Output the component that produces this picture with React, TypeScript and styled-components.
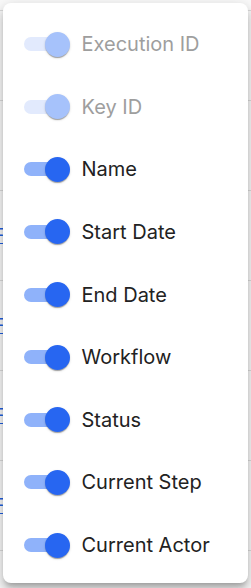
import React from "react";
import styled, { createGlobalStyle } from "styled-components";

const Global = createGlobalStyle`
  html, body { margin: 0; padding: 0; background: #ffffff; }
  body { font-family: Inter, "Noto Sans", sans-serif; overflow: hidden; }
`;

const Page = styled.div`
  position: relative;
  width: 251px;
  height: 588px;
  overflow: hidden;
  background: #fafafa;
`;

const Table = styled.div`
  display: flex;
  flex-direction: column;
  padding-top: 10px;
`;

const TRow = styled.div<{ $h: number }>`
  height: ${(p) => p.$h}px;
  border-top: 1px solid #dcdcdc;
  box-sizing: border-box;
  display: flex;
  align-items: center;
  font-size: 18px;
  font-family: Inter, sans-serif;
`;

const Link = styled.span`
  color: #1f5fe0;
  text-decoration: underline;
  margin-left: -6px;
`;

const Dark = styled.span`
  color: #222;
  margin-left: -8px;
`;

const Popover = styled.div`
  position: absolute;
  left: 3px;
  top: 3px;
  width: 245px;
  height: 580px;
  background: #fff;
  border-radius: 8px;
  box-shadow: 0 5px 5px -3px rgba(0,0,0,0.2), 0 8px 10px 1px rgba(0,0,0,0.14), 0 3px 14px 2px rgba(0,0,0,0.12);
  box-sizing: border-box;
  padding: 9.7px 0 6.7px;
  display: flex;
  flex-direction: column;
`;

const Item = styled.div`
  height: 62.625px;
  display: flex;
  align-items: center;
  padding-left: 20.5px;
  flex-shrink: 0;
`;

const SwitchBox = styled.div`
  position: relative;
  width: 48px;
  height: 26px;
  flex-shrink: 0;
`;

const Track = styled.div<{ $disabled?: boolean }>`
  position: absolute;
  left: 0;
  top: 6px;
  width: 38px;
  height: 14px;
  border-radius: 7px;
  background: ${(p) => (p.$disabled ? "#e2eafd" : "#8fb2fa")};
`;

const Thumb = styled.div<{ $disabled?: boolean }>`
  position: absolute;
  left: 21.5px;
  top: 0.5px;
  width: 25px;
  height: 25px;
  border-radius: 50%;
  background: ${(p) => (p.$disabled ? "#a6c2fb" : "#2766f1")};
  box-shadow: 0 2px 1px -1px rgba(0,0,0,0.2), 0 1px 1px 0 rgba(0,0,0,0.14), 0 1px 3px 0 rgba(0,0,0,0.12);
`;

const Label = styled.span<{ $disabled?: boolean }>`
  margin-left: 10px;
  font-family: Inter, sans-serif;
  font-size: 20px;
  font-weight: 400;
  color: ${(p) => (p.$disabled ? "#9e9e9e" : "#222222")};
  white-space: nowrap;
`;

const items = [
  { label: "Execution ID", disabled: true },
  { label: "Key ID", disabled: true },
  { label: "Name" },
  { label: "Start Date" },
  { label: "End Date" },
  { label: "Workflow" },
  { label: "Status" },
  { label: "Current Step" },
  { label: "Current Actor" },
];

const rows: { h: number; kind?: "dark" | "link" }[] = [
  { h: 90, kind: "dark" },
  { h: 90, kind: "dark" },
  { h: 90, kind: "link" },
  { h: 90, kind: "link" },
  { h: 90, kind: "link" },
  { h: 90, kind: "link" },
  { h: 90 },
];

export default function App() {
  return (
    <Page>
      <Global />
      <Table>
        {rows.map((r, i) => (
          <TRow key={i} $h={r.h}>
            {r.kind === "link" ? <Link>F</Link> : r.kind === "dark" ? <Dark>-</Dark> : null}
          </TRow>
        ))}
      </Table>
      <Popover>
        {items.map((it) => (
          <Item key={it.label}>
            <SwitchBox>
              <Track $disabled={it.disabled} />
              <Thumb $disabled={it.disabled} />
            </SwitchBox>
            <Label $disabled={it.disabled}>{it.label}</Label>
          </Item>
        ))}
      </Popover>
    </Page>
  );
}
